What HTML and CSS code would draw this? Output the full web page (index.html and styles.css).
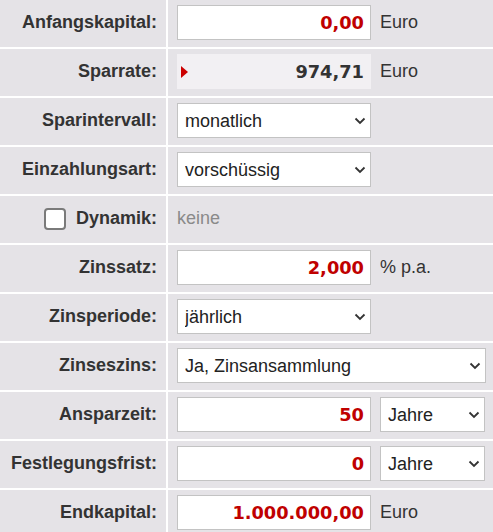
FILE: index.html
```html
<!DOCTYPE html>
<html lang="de">
<head>
<meta charset="utf-8">
<link rel="stylesheet" href="styles.css">
</head>
<body>
<div class="form">
  <div class="label">Anfangskapital:</div>
  <div class="field"><input class="num" type="text" value="0,00"><span class="unit">Euro</span></div>

  <div class="label">Sparrate:</div>
  <div class="field"><div class="result"><span class="tri"></span><span class="rval">974,71</span></div><span class="unit">Euro</span></div>

  <div class="label">Sparintervall:</div>
  <div class="field"><div class="sel"><select><option>monatlich</option></select><svg class="chev" width="12" height="8" viewBox="0 0 12 8"><path d="M1.5 1.5 L6 6 L10.5 1.5" fill="none" stroke="#333" stroke-width="1.8"/></svg></div></div>

  <div class="label">Einzahlungsart:</div>
  <div class="field"><div class="sel"><select><option>vorschüssig</option></select><svg class="chev" width="12" height="8" viewBox="0 0 12 8"><path d="M1.5 1.5 L6 6 L10.5 1.5" fill="none" stroke="#333" stroke-width="1.8"/></svg></div></div>

  <div class="label"><span class="check"></span>Dynamik:</div>
  <div class="field"><span class="muted">keine</span></div>

  <div class="label">Zinssatz:</div>
  <div class="field"><input class="num" type="text" value="2,000"><span class="unit">% p.a.</span></div>

  <div class="label">Zinsperiode:</div>
  <div class="field"><div class="sel"><select><option>jährlich</option></select><svg class="chev" width="12" height="8" viewBox="0 0 12 8"><path d="M1.5 1.5 L6 6 L10.5 1.5" fill="none" stroke="#333" stroke-width="1.8"/></svg></div></div>

  <div class="label">Zinseszins:</div>
  <div class="field"><div class="sel wide"><select><option>Ja, Zinsansammlung</option></select><svg class="chev" width="12" height="8" viewBox="0 0 12 8"><path d="M1.5 1.5 L6 6 L10.5 1.5" fill="none" stroke="#333" stroke-width="1.8"/></svg></div></div>

  <div class="label">Ansparzeit:</div>
  <div class="field"><input class="num" type="text" value="50"><div class="sel small"><select><option>Jahre</option></select><svg class="chev" width="12" height="8" viewBox="0 0 12 8"><path d="M1.5 1.5 L6 6 L10.5 1.5" fill="none" stroke="#333" stroke-width="1.8"/></svg></div></div>

  <div class="label">Festlegungsfrist:</div>
  <div class="field"><input class="num" type="text" value="0"><div class="sel small"><select><option>Jahre</option></select><svg class="chev" width="12" height="8" viewBox="0 0 12 8"><path d="M1.5 1.5 L6 6 L10.5 1.5" fill="none" stroke="#333" stroke-width="1.8"/></svg></div></div>

  <div class="label">Endkapital:</div>
  <div class="field"><input class="num" type="text" value="1.000.000,00"><span class="unit">Euro</span></div>
</div>
</body>
</html>
```

FILE: styles.css
```css
html, body {
  margin: 0;
  padding: 0;
  background: #ffffff;
}

body {
  font-family: "Liberation Sans", Arial, sans-serif;
  font-size: 18px;
  color: #333;
  overflow: hidden;
}

.form {
  display: grid;
  grid-template-columns: 166px 1fr;
  grid-auto-rows: 47px;
  gap: 2px;
  background: #ffffff;
}

.label,
.field {
  background: #e5e3e7;
  display: flex;
  align-items: center;
  padding-bottom: 3px;
  box-sizing: border-box;
}

.label {
  justify-content: flex-end;
  padding-right: 9px;
  padding-top: 1px;
  font-weight: bold;
  color: #333;
}

.field {
  padding-left: 9px;
}

.num {
  box-sizing: border-box;
  width: 194px;
  height: 35px;
  margin: 0;
  border: 1px solid #c3c3c3;
  background: #fff;
  padding: 1px 6px 0 6px;
  text-align: right;
  font-family: "DejaVu Sans", Verdana, sans-serif;
  font-weight: bold;
  font-size: 17.8px;
  color: #c00000;
  outline: none;
}

.unit {
  margin-left: 9px;
  padding-top: 1px;
  color: #333;
}

.result {
  box-sizing: border-box;
  width: 194px;
  height: 35px;
  background: #f2f0f3;
  display: flex;
  align-items: center;
  justify-content: space-between;
  padding: 1px 7px 0 4px;
}

.tri {
  width: 0;
  height: 0;
  border-top: 6px solid transparent;
  border-bottom: 6px solid transparent;
  border-left: 7px solid #cc0000;
}

.rval {
  font-family: "DejaVu Sans", Verdana, sans-serif;
  font-weight: bold;
  font-size: 17.8px;
  color: #333;
}

.sel {
  position: relative;
  width: 194px;
  height: 35px;
}

.sel.wide {
  width: 309px;
}

.sel.small {
  width: 105px;
  margin-left: 9px;
}

.sel select {
  appearance: none;
  -webkit-appearance: none;
  box-sizing: border-box;
  width: 100%;
  height: 100%;
  margin: 0;
  border: 1px solid #c3c3c3;
  border-radius: 0;
  background: #fff;
  padding: 1px 24px 0 7px;
  font-family: "Liberation Sans", Arial, sans-serif;
  font-size: 18px;
  color: #222;
  outline: none;
}

.chev {
  position: absolute;
  right: 5px;
  top: 14px;
  pointer-events: none;
}

.check {
  box-sizing: border-box;
  width: 22px;
  height: 22px;
  border: 2px solid #7a7a7a;
  border-radius: 4px;
  background: #fff;
  margin-right: 10px;
}

.muted {
  color: #8a8a8a;
  padding-top: 1px;
}
```
